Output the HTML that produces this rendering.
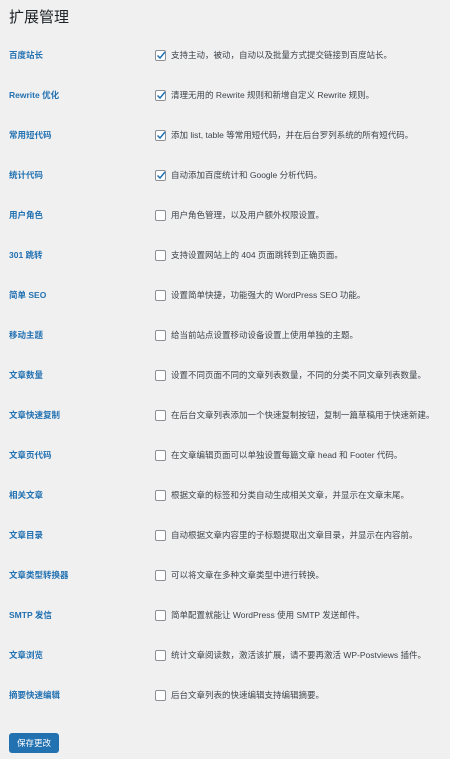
<!DOCTYPE html>
<html><head><meta charset="utf-8"><style>
body{margin:0;background:#f0f0f1;width:450px;height:759px;overflow:hidden;font-family:"Liberation Sans","Noto Sans CJK SC",sans-serif;}
h1{position:absolute;left:9px;top:6px;margin:0;font-size:15px;font-weight:400;color:#1d2327;}
.r{position:absolute;left:0;width:450px;height:20px;}
.l{position:absolute;left:9px;top:3px;font-size:8.5px;font-weight:700;color:#2271b1;white-space:nowrap;}
.c{position:absolute;left:155px;top:4px;width:9px;height:9px;border:1px solid #8c8f94;border-radius:2px;background:#fff;}
.c svg{position:absolute;left:-1px;top:-2px;}
.t{position:absolute;left:171px;top:3px;font-size:8.5px;color:#3c434a;white-space:nowrap;}
.b{position:absolute;left:9px;top:733px;width:50px;height:20px;background:#2271b1;border-radius:3px;color:#fff;font-size:8.5px;line-height:20px;text-align:center;}
</style></head><body>
<h1>扩展管理</h1>
<div class="r" style="top:46px"><span class="l">百度站长</span><span class="c"><svg width="12" height="12" viewBox="0 0 12 12"><path d="M2.5 6.5l2.5 2.5 5-6" stroke="#2271b1" stroke-width="1.5" fill="none"/></svg></span><span class="t">支持主动，被动，自动以及批量方式提交链接到百度站长。</span></div>
<div class="r" style="top:86px"><span class="l">Rewrite 优化</span><span class="c"><svg width="12" height="12" viewBox="0 0 12 12"><path d="M2.5 6.5l2.5 2.5 5-6" stroke="#2271b1" stroke-width="1.5" fill="none"/></svg></span><span class="t">清理无用的 Rewrite 规则和新增自定义 Rewrite 规则。</span></div>
<div class="r" style="top:126px"><span class="l">常用短代码</span><span class="c"><svg width="12" height="12" viewBox="0 0 12 12"><path d="M2.5 6.5l2.5 2.5 5-6" stroke="#2271b1" stroke-width="1.5" fill="none"/></svg></span><span class="t">添加 list, table 等常用短代码，并在后台罗列系统的所有短代码。</span></div>
<div class="r" style="top:166px"><span class="l">统计代码</span><span class="c"><svg width="12" height="12" viewBox="0 0 12 12"><path d="M2.5 6.5l2.5 2.5 5-6" stroke="#2271b1" stroke-width="1.5" fill="none"/></svg></span><span class="t">自动添加百度统计和 Google 分析代码。</span></div>
<div class="r" style="top:206px"><span class="l">用户角色</span><span class="c"></span><span class="t">用户角色管理，以及用户额外权限设置。</span></div>
<div class="r" style="top:246px"><span class="l">301 跳转</span><span class="c"></span><span class="t">支持设置网站上的 404 页面跳转到正确页面。</span></div>
<div class="r" style="top:286px"><span class="l">简单 SEO</span><span class="c"></span><span class="t">设置简单快捷，功能强大的 WordPress SEO 功能。</span></div>
<div class="r" style="top:326px"><span class="l">移动主题</span><span class="c"></span><span class="t">给当前站点设置移动设备设置上使用单独的主题。</span></div>
<div class="r" style="top:366px"><span class="l">文章数量</span><span class="c"></span><span class="t">设置不同页面不同的文章列表数量，不同的分类不同文章列表数量。</span></div>
<div class="r" style="top:406px"><span class="l">文章快速复制</span><span class="c"></span><span class="t">在后台文章列表添加一个快速复制按钮，复制一篇草稿用于快速新建。</span></div>
<div class="r" style="top:446px"><span class="l">文章页代码</span><span class="c"></span><span class="t">在文章编辑页面可以单独设置每篇文章 head 和 Footer 代码。</span></div>
<div class="r" style="top:486px"><span class="l">相关文章</span><span class="c"></span><span class="t">根据文章的标签和分类自动生成相关文章，并显示在文章末尾。</span></div>
<div class="r" style="top:526px"><span class="l">文章目录</span><span class="c"></span><span class="t">自动根据文章内容里的子标题提取出文章目录，并显示在内容前。</span></div>
<div class="r" style="top:566px"><span class="l">文章类型转换器</span><span class="c"></span><span class="t">可以将文章在多种文章类型中进行转换。</span></div>
<div class="r" style="top:606px"><span class="l">SMTP 发信</span><span class="c"></span><span class="t">简单配置就能让 WordPress 使用 SMTP 发送邮件。</span></div>
<div class="r" style="top:646px"><span class="l">文章浏览</span><span class="c"></span><span class="t">统计文章阅读数，激活该扩展，请不要再激活 WP-Postviews 插件。</span></div>
<div class="r" style="top:686px"><span class="l">摘要快速编辑</span><span class="c"></span><span class="t">后台文章列表的快速编辑支持编辑摘要。</span></div>
<div class="b">保存更改</div>
</body></html>
